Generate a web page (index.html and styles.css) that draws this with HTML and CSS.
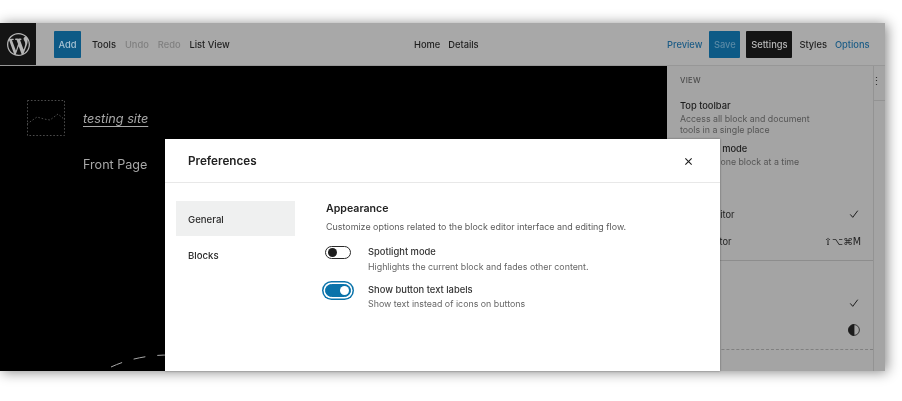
FILE: index.html
```html
<!DOCTYPE html>
<html lang="en">
<head>
<meta charset="utf-8">
<title>Preferences</title>
<link rel="stylesheet" href="styles.css">
</head>
<body>
<div class="app">
  <header class="topbar">
    <div class="wp-box">
      <svg class="wp-logo" viewBox="0 0 20 20"><path d="M20 10c0-5.51-4.49-10-10-10C4.48 0 0 4.49 0 10c0 5.52 4.48 10 10 10 5.51 0 10-4.48 10-10zM7.78 15.37L4.37 6.22c.55-.02 1.17-.08 1.17-.08.5-.06.44-1.13-.06-1.11 0 0-1.45.11-2.37.11-.18 0-.37 0-.58-.01C4.12 2.69 6.87 1.11 10 1.11c2.33 0 4.45.87 6.05 2.34-.68-.11-1.65.39-1.65 1.58 0 .74.45 1.36.9 2.1.35.61.55 1.36.55 2.46 0 1.49-1.4 5-1.4 5l-3.03-8.37c.54-.02.82-.17.82-.17.5-.05.44-1.25-.06-1.22 0 0-1.44.12-2.38.12-.87 0-2.33-.12-2.33-.12-.5-.03-.56 1.2-.06 1.22l.92.08 1.26 3.41zM17.41 10c.24-.64.74-1.87.43-4.25.7 1.29 1.05 2.71 1.05 4.25 0 3.29-1.73 6.24-4.4 7.78.97-2.59 1.94-5.2 2.92-7.78zM6.1 18.09C3.12 16.65 1.11 13.53 1.11 10c0-1.3.23-2.48.72-3.59C3.25 10.3 4.67 14.2 6.1 18.09zm4.03-6.63l2.58 6.98c-.86.29-1.76.45-2.71.45-.79 0-1.57-.11-2.29-.33.81-2.38 1.62-4.74 2.42-7.1z"/></svg>
    </div>
    <div class="tools">
      <span class="btn btn-add">Add</span>
      <span class="tool">Tools</span>
      <span class="tool muted">Undo</span>
      <span class="tool muted">Redo</span>
      <span class="tool">List View</span>
    </div>
    <div class="center">
      <span class="tool">Home</span>
      <span class="tool">Details</span>
    </div>
    <div class="actions">
      <span class="tool link">Preview</span>
      <span class="btn btn-save">Save</span>
      <span class="btn btn-settings">Settings</span>
      <span class="tool styles">Styles</span>
      <span class="tool link">Options</span>
    </div>
  </header>
  <div class="body">
    <main class="canvas">
      <div class="site-row">
        <svg class="placeholder" viewBox="0 0 38 36"><rect x=".5" y=".5" width="37" height="35" class="ph-line"/><path d="M0 24 L10 17 L17 19 L23 20 L31 14 L38 20" class="ph-line"/></svg>
        <span class="site-title">testing site</span>
      </div>
      <div class="page-title">Front Page</div>
      <svg class="arc" viewBox="0 0 60 18"><path d="M1 17 Q27 5 59 5"/></svg>
    </main>
    <aside class="menu">
      <div class="menu-panel">
        <div class="menu-head">VIEW</div>
        <div class="menu-item">
          <div class="menu-name">Top toolbar</div>
          <div class="menu-desc">Access all block and document<br>tools in a single place</div>
        </div>
        <div class="menu-item">
          <div class="menu-name">Spotlight mode</div>
          <div class="menu-desc">Focus on one block at a time</div>
        </div>
        <div class="menu-row first"><span>Visual editor</span><svg class="check" viewBox="0 0 12 12"><path d="M1.5 6.5 L4.5 10 L10.5 2"/></svg></div>
        <div class="menu-row"><span>Code editor</span><span class="keys">⇧⌥⌘M</span></div>
        <div class="menu-sep"></div>
        <div class="menu-row second"><span>Default</span><svg class="check" viewBox="0 0 12 12"><path d="M1.5 6.5 L4.5 10 L10.5 2"/></svg></div>
        <div class="menu-row"><span>Contrast</span><svg class="contrast" viewBox="0 0 12 12"><circle cx="6" cy="6" r="5.4"/><path d="M6 .6 A5.4 5.4 0 0 0 6 11.4 Z"/></svg></div>
        <div class="menu-sep dashed"></div>
      </div>
      <div class="menu-strip"><span class="dots">⋮</span></div>
    </aside>
  </div>
  <section class="modal">
    <div class="modal-head">
      <h1 class="modal-title">Preferences</h1>
      <svg class="close" viewBox="0 0 10 10"><path d="M1.5 1.5 L8.5 8.5 M8.5 1.5 L1.5 8.5"/></svg>
    </div>
    <div class="modal-body">
      <nav class="modal-nav">
        <div class="nav-item active">General</div>
        <div class="nav-item">Blocks</div>
      </nav>
      <div class="modal-main">
        <h2 class="section-title">Appearance</h2>
        <p class="section-desc">Customize options related to the block editor interface and editing flow.</p>
        <div class="option">
          <span class="toggle"><span class="knob"></span></span>
          <div>
            <div class="opt-name">Spotlight mode</div>
            <div class="opt-desc">Highlights the current block and fades other content.</div>
          </div>
        </div>
        <div class="option">
          <span class="toggle on"><span class="knob"></span></span>
          <div>
            <div class="opt-name">Show button text labels</div>
            <div class="opt-desc">Show text instead of icons on buttons</div>
          </div>
        </div>
      </div>
    </div>
  </section>
</div>
</body>
</html>
```

FILE: styles.css
```css
* { box-sizing: border-box; }
html, body { margin: 0; height: 401px; overflow: hidden; background: #fff; }
body { padding-top: 23px; font-family: Inter, "Liberation Sans", sans-serif; color: #222; }

.app {
  position: relative;
  width: 885px;
  height: 348px;
  background: #a4a4a4;
  box-shadow: 2px 1px 12px rgba(0,0,0,.48);
  filter: blur(.55px);
  display: flex;
  flex-direction: column;
}

.topbar {
  height: 43px;
  flex: none;
  display: flex;
  align-items: center;
  background: #a8a8a8;
  border-bottom: 1px solid #979797;
  font-size: 9.3px;
  font-weight: 500;
}
.wp-box { width: 36px; height: 42px; background: #141414; display: flex; align-items: center; justify-content: center; }
.wp-logo { width: 23px; height: 23px; fill: #b5b5b5; }

.tools { display: flex; align-items: center; margin-left: 18px; width: 186px; }
.tool { color: #1f1f1f; white-space: nowrap; }
.tool.muted { color: #808080; margin-left: 9px; }
.tool.muted + .tool { margin-left: 9px; }
.btn-add + .tool { margin-left: 11px; }
.btn { height: 27px; display: flex; align-items: center; justify-content: center; border-radius: 1px; }
.btn-add { width: 27px; background: #0d5a86; color: #a8c4d4; }

.center { display: flex; gap: 8px; margin-left: 174px; width: 95px; }

.actions { display: flex; align-items: center; margin-left: 158px; }
.link { color: #1c5c86; }
.btn-save { width: 31px; margin-left: 7px; background: #0d5a86; color: #5a8aa6; }
.btn-settings { width: 46px; margin-left: 6px; background: #141414; color: #b8b8b8; }
.styles { margin: 0 8px 0 7px; }

.body { flex: 1; display: flex; min-height: 0; }

.canvas { width: 667px; background: #000; position: relative; padding: 34px 0 0 27px; color: #a8a8a8; }
.site-row { display: flex; align-items: center; }
.placeholder { width: 38px; height: 36px; }
.ph-line { fill: none; stroke: #4c4c4c; stroke-width: 1; stroke-dasharray: 1.6 1.8; }
.site-title { margin: 0 0 0 18px; font-size: 12.7px; font-style: italic; text-decoration: underline; text-underline-offset: 3px; }
.page-title { margin: 21px 0 0 56px; font-size: 12.6px; }
.arc { position: absolute; left: 110px; bottom: 3px; width: 60px; height: 18px; }
.arc path { fill: none; stroke: #a8a8a8; stroke-width: 1; stroke-dasharray: 12 12; }

.menu { flex: 1; display: flex; }
.menu-panel { width: 207px; padding-top: 10px; border-right: 1px solid #939393; }
.menu-head { padding-left: 13px; font-size: 7.6px; letter-spacing: .3px; line-height: 10px; color: #4c4c4c; font-weight: 500; }
.menu-item { padding: 14px 0 0 13px; }
.menu-item + .menu-item { padding-top: 8px; }
.menu-name { font-size: 9.3px; line-height: 12px; color: #1d1d1d; font-weight: 500; }
.menu-desc { font-size: 8.8px; line-height: 10.5px; color: #555; margin-top: 2px; }
.menu-row { height: 27px; display: flex; align-items: center; justify-content: space-between; padding: 0 12px 0 13px; font-size: 9.3px; color: #222; }
.menu-row.first { margin-top: 33px; }
.menu-row.second { margin-top: 29px; }
.menu-sep { height: 1px; margin-top: 5px; background: #8d8d8d; }
.menu-sep.dashed { background: none; border-top: 1px dashed #808080; margin-top: 5px; }
.check { width: 10px; height: 10px; margin-right: 2px; fill: none; stroke: #1d1d1d; stroke-width: 1.2; }
.contrast { width: 12px; height: 12px; margin-right: 1px; fill: #1d1d1d; stroke: #1d1d1d; stroke-width: .8; }
.contrast circle { fill: none; }
.keys { font-family: "DejaVu Sans", sans-serif; font-size: 9.6px; color: #222; }

.menu-strip { flex: 1; height: 35px; border-bottom: 1px solid #939393; position: relative; }
.dots { position: absolute; left: -3px; top: 9px; font-size: 11px; line-height: 12px; color: #333; }

.modal {
  position: absolute;
  left: 165px;
  top: 116px;
  width: 555px;
  height: 232px;
  background: #fff;
  box-shadow: 0 0 2px rgba(0,0,0,.4);
}
.modal-head { height: 44px; padding: 1px 27px 0 23px; display: flex; align-items: center; justify-content: space-between; border-bottom: 1px solid #e8e8e8; }
.modal-title { margin: 0; font-size: 11.7px; font-weight: 600; color: #222; }
.close { width: 9px; height: 9px; fill: none; stroke: #1d1d1d; stroke-width: 1.2; }
.modal-body { display: flex; padding: 18px 0 0 11px; }
.modal-nav { width: 150px; flex: none; }
.nav-item { width: 119px; height: 35px; display: flex; align-items: center; padding: 1px 0 0 12px; font-size: 9.6px; font-weight: 500; color: #2a2a2a; }
.nav-item.active { background: #eff0f0; }
.nav-item + .nav-item { margin-top: 1px; }

.modal-main { flex: 1; padding-top: 1px; }
.section-title { margin: 0; font-size: 10.6px; line-height: 14px; font-weight: 600; color: #222; }
.section-desc { margin: 5px 0 0; font-size: 8.92px; line-height: 12px; color: #5c5c5c; }
.option { display: flex; align-items: flex-start; margin-top: 13px; }
.option + .option { margin-top: 12px; }
.opt-name { font-size: 9.4px; line-height: 12px; color: #333; font-weight: 500; }
.opt-desc { font-size: 8.85px; line-height: 11px; margin-top: 2.5px; color: #666; }
.toggle { width: 26px; height: 13px; margin: 0 17px 0 -1px; flex: none; border: 1.2px solid #2a2a2a; border-radius: 7px; display: flex; align-items: center; padding: 0 1.5px; background: #fff; }
.knob { width: 9px; height: 9px; border-radius: 50%; background: #1e1e1e; }
.toggle.on { background: #0a73aa; border-color: #0a73aa; justify-content: flex-end; box-shadow: 0 0 0 1.5px #fff, 0 0 0 3px #0a73aa; }
.toggle.on .knob { background: #fff; }
```
